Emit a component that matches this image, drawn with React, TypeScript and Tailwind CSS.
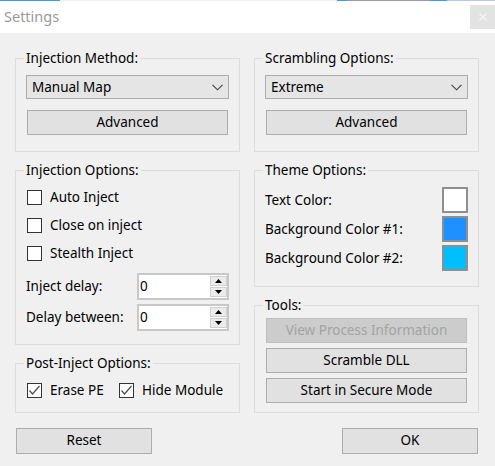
import React from "react";

function Group({ title, className, children }: { title: string; className?: string; children: React.ReactNode }) {
  return (
    <fieldset className={"border border-[#dcdcdc] px-[10px] " + (className ?? "")}>
      <legend className="ml-[-2px] px-[2px] leading-[17px]">{title}</legend>
      {children}
    </fieldset>
  );
}

function Combo({ value }: { value: string }) {
  return (
    <div className="mt-[8px] h-[24px] border border-[#acacac] bg-[#e5e5e5] flex items-center justify-between pl-[5px] pr-[5px]">
      <span>{value}</span>
      <svg width="11" height="7" viewBox="0 0 11 7">
        <polyline points="0.5,0.8 5.5,5.8 10.5,0.8" fill="none" stroke="#404040" strokeWidth="1.1" />
      </svg>
    </div>
  );
}

function Btn({ children, className, disabled }: { children: React.ReactNode; className?: string; disabled?: boolean }) {
  return (
    <button
      className={
        (disabled
          ? "border-[#bfbfbf] bg-[#cccccc] text-[#a3a3a3] "
          : "border-[#adadad] bg-[#e1e1e1] text-black ") +
        "block border text-center leading-none " +
        (className ?? "")
      }
    >
      {children}
    </button>
  );
}

function Check({ label, checked, className }: { label: string; checked?: boolean; className?: string }) {
  return (
    <div className={"flex items-center " + (className ?? "")}>
      <span className="ml-[1px] w-[15px] h-[15px] shrink-0 border border-[#333333] bg-white flex items-center justify-center">
        {checked && (
          <svg width="13" height="13" viewBox="0 0 13 13">
            <polyline points="1.5,6.5 4.5,10 11.5,2" fill="none" stroke="#4a4a4a" strokeWidth="1.2" />
          </svg>
        )}
      </span>
      <span className="ml-[8px] whitespace-nowrap">{label}</span>
    </div>
  );
}

function Numeric({ label, className }: { label: string; className?: string }) {
  return (
    <div className={"flex items-center justify-between " + (className ?? "")}>
      <span>{label}</span>
      <div className="w-[92px] h-[27px] border-2 border-[#c8c8c8] bg-white flex items-center justify-between pl-[1px] pr-[0px]">
        <span>0</span>
        <div className="w-[17px] h-full flex flex-col gap-[1px] py-[1px]">
          <div className="flex-1 bg-[#ebebeb] border border-[#d0d0d0] flex items-center justify-center">
            <svg width="7" height="4" viewBox="0 0 7 4">
              <polygon points="0,4 3.5,0 7,4" fill="#000" />
            </svg>
          </div>
          <div className="flex-1 bg-[#ebebeb] border border-[#d0d0d0] flex items-center justify-center">
            <svg width="7" height="4" viewBox="0 0 7 4">
              <polygon points="0,0 3.5,4 7,0" fill="#000" />
            </svg>
          </div>
        </div>
      </div>
    </div>
  );
}

function Swatch({ label, color }: { label: string; color: string }) {
  return (
    <div className="flex items-center justify-between">
      <span>{label}</span>
      <span className={"w-[26px] h-[26px] border-2 border-[#8f8f8f] " + color} />
    </div>
  );
}

export default function App() {
  return (
    <div className="w-[495px] h-[466px] flex flex-col font-['Noto_Sans',sans-serif] text-[13.5px] text-black overflow-hidden">
      <div className="h-[1px] flex shrink-0">
        <div className="w-[60px] bg-[#3b9df0]" />
        <div className="w-[277px] bg-[#f2f2f2]" />
        <div className="w-[10px] bg-[#3b9df0]" />
        <div className="w-[83px] bg-[#9a9aa8]" />
        <div className="w-[17px] bg-[#3b9df0]" />
        <div className="flex-1 bg-[#b9c6f0]" />
      </div>
      <div className="h-[32px] bg-white flex items-start justify-between shrink-0">
        <span className="ml-[4px] mt-[5px] text-[14.5px] leading-[20px] text-[#9a9a9a]">Settings</span>
        <div className="mt-[4px] w-[25px] h-[24px] bg-[#e3e3e3] flex items-center justify-center">
          <svg width="8" height="8" viewBox="0 0 8 8">
            <path d="M0.5 0.5 L7.5 7.5 M7.5 0.5 L0.5 7.5" stroke="#f7f7f7" strokeWidth="1.2" />
          </svg>
        </div>
      </div>
      <div className="flex-1 bg-[#f0f0f0] pt-[17px] pl-[15px] flex gap-[14px]">
        <div className="w-[225px] flex flex-col">
          <Group title="Injection Method:" className="pb-[16px]">
            <Combo value="Manual Map" />
            <Btn className="mt-[11px] mx-[1px] w-[201px] h-[25px]">Advanced</Btn>
          </Group>
          <Group title="Injection Options:" className="mt-[10px] pb-[13px]">
            <div className="mt-[4px]">
              <Check label="Auto Inject" className="h-[28px]" />
              <Check label="Close on inject" className="h-[28px]" />
              <Check label="Stealth Inject" className="h-[28px]" />
            </div>
            <Numeric label="Inject delay:" className="mt-[6px]" />
            <Numeric label="Delay between:" className="mt-[4px]" />
          </Group>
          <Group title="Post-Inject Options:" className="mt-[10px] pb-[8px]">
            <div className="mt-[4px] h-[28px] flex items-center">
              <Check label="Erase PE" checked className="w-[92px]" />
              <Check label="Hide Module" checked />
            </div>
          </Group>
          <Btn className="mt-[15px] ml-[1px] w-[136px] h-[26px]">Reset</Btn>
        </div>
        <div className="w-[225px] flex flex-col">
          <Group title="Scrambling Options:" className="pb-[16px]">
            <Combo value="Extreme" />
            <Btn className="mt-[11px] mx-[1px] w-[201px] h-[25px]">Advanced</Btn>
          </Group>
          <Group title="Theme Options:" className="mt-[10px] pb-[15px]">
            <div className="mt-[8px] flex flex-col gap-[3px]">
              <Swatch label="Text Color:" color="bg-white" />
              <Swatch label="Background Color #1:" color="bg-[#1e90ff]" />
              <Swatch label="Background Color #2:" color="bg-[#00bfff]" />
            </div>
          </Group>
          <Group title="Tools:" className="mt-[10px] pb-[9px]">
            <div className="mt-[4px] flex flex-col gap-[5px]">
              <Btn disabled className="mx-[1px] w-[201px] h-[25px]">View Process Information</Btn>
              <Btn className="mx-[1px] w-[201px] h-[25px]">Scramble DLL</Btn>
              <Btn className="mx-[1px] w-[201px] h-[25px]">Start in Secure Mode</Btn>
            </div>
          </Group>
          <Btn className="mt-[15px] mr-[1px] self-end w-[136px] h-[26px]">OK</Btn>
        </div>
      </div>
    </div>
  );
}
